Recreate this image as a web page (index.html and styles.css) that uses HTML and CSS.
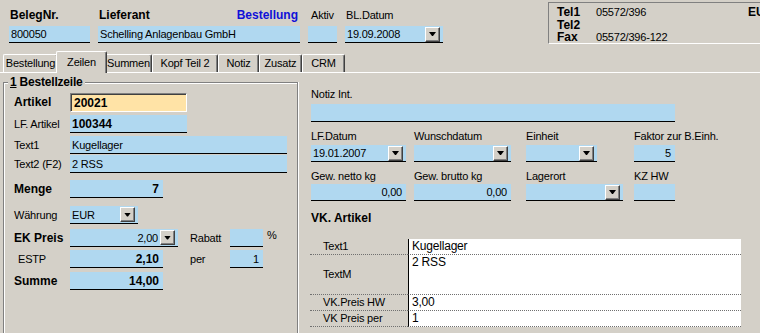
FILE: index.html
```html
<!DOCTYPE html>
<html>
  <head>
    <meta charset="UTF-8" />
    <meta name="viewport" content="width=device-width, initial-scale=1.0" />
    <title>Bestellung - Zeilen</title>
    <link rel="stylesheet" href="styles.css">
  </head>
  <body>
    <div class="header">
      <div class="hcol beleg">
        <div class="hlabel"><b>BelegNr.</b></div>
        <div class="fld">800050</div>
      </div>
      <div class="hcol lief">
        <div class="hlabel"><b>Lieferant</b><b class="blue">Bestellung</b></div>
        <div class="fld">Schelling Anlagenbau GmbH</div>
      </div>
      <div class="hcol aktiv">
        <div class="hlabel">Aktiv</div>
        <div class="fld"></div>
      </div>
      <div class="hcol bldatum">
        <div class="hlabel">BL.Datum</div>
        <div class="fld">19.09.2008<span class="dd"></span></div>
      </div>
      <div class="info">
        <b>Tel1</b><span>05572/396</span><b>EU</b>
        <b>Tel2</b><span></span><span></span>
        <b>Fax</b><span>05572/396-122</span><span></span>
      </div>
    </div>

    <div class="tabs">
      <div class="tab">Bestellung</div>
      <div class="tab active">Zeilen</div>
      <div class="tab">Summen</div>
      <div class="tab">Kopf Teil 2</div>
      <div class="tab">Notiz</div>
      <div class="tab">Zusatz</div>
      <div class="tab">CRM</div>
    </div>

    <div class="panel">
      <fieldset class="group">
        <legend><u>1</u> Bestellzeile</legend>
        <div class="lines">
          <b class="lbl tall">Artikel</b>
          <div class="fld yellow w117 b">20021</div>

          <span class="lbl">LF. Artikel</span>
          <div class="fld w117 b">100344</div>

          <span class="lbl">Text1</span>
          <div class="fld wide">Kugellager</div>

          <span class="lbl">Text2 (F2)</span>
          <div class="fld wide">2 RSS</div>

          <b class="lbl">Menge</b>
          <div class="fld w93 b num">7</div>

          <span class="lbl">Währung</span>
          <div class="fld w68">EUR<span class="dd"></span></div>

          <b class="lbl">EK Preis</b>
          <div class="fld w108"><span class="val">2,00</span><span class="dd"></span></div>
          <span class="lbl2">Rabatt</span>
          <div class="fld w33"></div>
          <span class="pct">%</span>

          <span class="lbl indent">ESTP</span>
          <div class="fld w93 b num">2,10</div>
          <span class="lbl2">per</span>
          <div class="fld w33 num">1</div>

          <b class="lbl">Summe</b>
          <div class="fld w93 b num">14,00</div>
        </div>
      </fieldset>

      <div class="side">
        <div class="slabel">Notiz Int.</div>
        <div class="fld notiz"></div>

        <div class="quad">
          <span class="slabel">LF.Datum</span>
          <span class="slabel">Wunschdatum</span>
          <span class="slabel">Einheit</span>
          <span class="slabel">Faktor zur B.Einh.</span>

          <div class="fld w95">19.01.2007<span class="dd"></span></div>
          <div class="fld w97"><span class="dd"></span></div>
          <div class="fld w71"><span class="dd"></span></div>
          <div class="fld w41 num">5</div>

          <span class="slabel">Gew. netto kg</span>
          <span class="slabel">Gew. brutto kg</span>
          <span class="slabel">Lagerort</span>
          <span class="slabel">KZ HW</span>

          <div class="fld w95 num">0,00</div>
          <div class="fld w97 num">0,00</div>
          <div class="fld w97"><span class="dd"></span></div>
          <div class="fld w41"></div>
        </div>

        <b class="vk-title">VK. Artikel</b>

        <div class="vk">
          <div class="vk-l">Text1</div>
          <div class="vk-v">Kugellager</div>
          <div class="vk-l mid">TextM</div>
          <div class="vk-v">2 RSS</div>
          <div class="vk-l">VK.Preis HW</div>
          <div class="vk-v">3,00</div>
          <div class="vk-l">VK Preis per</div>
          <div class="vk-v">1</div>
        </div>
      </div>
    </div>
  </body>
</html>
```

FILE: styles.css
```css
* {
  box-sizing: border-box;
  margin: 0;
  padding: 0;
}

body {
  width: 760px;
  height: 333px;
  overflow: hidden;
  background-color: #d4d0c8;
  font-family: "Liberation Sans", Arial, sans-serif;
  font-size: 11px;
  letter-spacing: -0.2px;
  color: #000;
}

b {
  font-size: 12px;
  font-weight: bold;
  letter-spacing: 0;
}

/* eingabefelder */
.fld {
  display: flex;
  align-items: center;
  height: 18px;
  padding: 0 2px;
  background-color: #b0d8f0;
  border-bottom: 1px solid #000;
  white-space: nowrap;
  overflow: hidden;
}

.fld.b {
  font-size: 12px;
  font-weight: bold;
  letter-spacing: 0;
}

.fld.num {
  justify-content: flex-end;
  padding-right: 4px;
}

.fld .val {
  flex: 1;
  text-align: right;
  padding-right: 2px;
}

.fld.yellow {
  height: 19px;
  padding-left: 3px;
  background-color: #ffe3a6;
  border: 1px solid;
  border-color: #808080 #fff #fff #808080;
  box-shadow: inset 1px 1px #404040;
}

.dd {
  display: flex;
  align-items: center;
  justify-content: center;
  flex-shrink: 0;
  width: 15px;
  height: 15px;
  margin-left: auto;
  margin-right: 1px;
  background-color: #d4d0c8;
  border: 1px solid;
  border-color: #fff #404040 #404040 #fff;
  box-shadow: inset -1px -1px #808080;
}

.dd::after {
  content: "";
  width: 7px;
  height: 4px;
  background-color: #000;
  clip-path: polygon(0 0, 7px 0, 4px 4px, 3px 4px);
}

/* kopfbereich */
.header {
  display: flex;
  height: 50px;
  padding-left: 9px;
}

.hcol {
  flex-shrink: 0;
  padding-top: 6px;
}

.hlabel {
  display: flex;
  justify-content: space-between;
  height: 18px;
  line-height: 18px;
  padding: 0 2px 0 1px;
}

.header .fld {
  height: 17px;
  margin-top: 2px;
}

.blue {
  color: #1010d8;
}

.beleg { width: 81px; }
.lief { width: 202px; margin-left: 8px; }
.aktiv { width: 29px; margin-left: 8px; }
.aktiv .hlabel { padding-left: 3px; }
.bldatum { width: 98px; margin-left: 8px; }

.info {
  display: grid;
  grid-template-columns: 39px 152px auto;
  grid-auto-rows: 12.5px;
  align-content: start;
  flex-shrink: 0;
  width: 230px;
  height: 42px;
  margin: 2px 0 0 105px;
  padding: 3px 0 0 8px;
  line-height: 12.5px;
  border-top: 1px solid #808080;
  border-left: 1px solid #808080;
  border-bottom: 1px solid #fff;
}

/* reiter */
.tabs {
  display: grid;
  grid-template-columns: 55px 47px 47px 66px 41px 43px 43px;
  align-items: end;
  height: 22px;
  padding-left: 3px;
  position: relative;
  z-index: 1;
}

.tab {
  height: 18px;
  line-height: 17px;
  text-align: center;
  border-top: 1px solid #fff;
  border-left: 1px solid #fff;
  border-right: 1px solid #404040;
  border-radius: 2px 2px 0 0;
  box-shadow: inset -1px 0 #808080;
  white-space: nowrap;
}

.tab.active {
  position: relative;
  z-index: 1;
  height: 22px;
  margin: 0 -2px -1px;
  padding-top: 2px;
  background-color: #d4d0c8;
}

.panel {
  display: flex;
  border-top: 1px solid #fff;
}

/* linke gruppe */
.group {
  flex-shrink: 0;
  width: 295px;
  height: 270px;
  margin: 2px 0 0 3px;
  padding: 0;
  min-width: 0;
  border: 1px solid #808080;
  box-shadow: inset 1px 1px #fff, 1px 0 #fff;
}

.group legend {
  margin-left: 4px;
  padding: 0 2px;
  font-size: 12px;
  font-weight: bold;
  line-height: 14px;
  background-color: #d4d0c8;
}

.lines {
  display: grid;
  grid-template-columns: 56px 120px 40px 33px 1fr;
  grid-template-rows: 22px 21px 19px 25px 26px 23px 21px 22px 18px;
  align-items: start;
  padding: 4px 0 0 10px;
}

.lbl {
  grid-column: 1;
  height: 18px;
  line-height: 18px;
  white-space: nowrap;
}

.lbl.tall {
  height: 19px;
  line-height: 19px;
}

.lbl.indent {
  padding-left: 4px;
}

.lbl2 {
  grid-column: 3;
  line-height: 18px;
}

.pct {
  padding-left: 4px;
  line-height: 11px;
  margin-top: 1px;
}

.w117 { width: 117px; }
.w108 { width: 108px; }
.w93 { width: 93px; }
.w68 { width: 68px; }
.w33 { width: 33px; }

.wide {
  grid-column: 2 / -1;
  width: 217px;
}

/* rechte seite */
.side {
  flex: 1;
  padding: 14px 0 0 13px;
}

.slabel {
  height: 14px;
  line-height: 14px;
  white-space: nowrap;
}

.notiz {
  width: 364px;
  margin-top: 3px;
}

.quad {
  display: grid;
  grid-template-columns: 103px 112px 108px 1fr;
  grid-template-rows: 16px 24px 15px 17px;
  align-items: start;
  margin-top: 7px;
}

.quad .fld {
  height: 17px;
}

.w95 { width: 95px; }
.w97 { width: 97px; }
.w71 { width: 71px; }
.w41 { width: 41px; }

.vk-title {
  display: block;
  margin-top: 10px;
  line-height: 14px;
}

.vk {
  display: grid;
  grid-template-columns: 98px 333px;
  grid-template-rows: 16px 40px 16px 16px;
  margin: 14px 0 0 -1px;
}

.vk-l {
  padding-left: 13px;
  line-height: 15px;
  border-bottom: 1px dotted #707070;
  white-space: nowrap;
}

.vk-l.mid {
  display: flex;
  align-items: center;
}

.vk-v {
  padding-left: 3px;
  font-size: 12px;
  line-height: 15px;
  background-color: #fff;
  border-left: 1px solid #000;
  border-bottom: 1px dotted #707070;
}
```
